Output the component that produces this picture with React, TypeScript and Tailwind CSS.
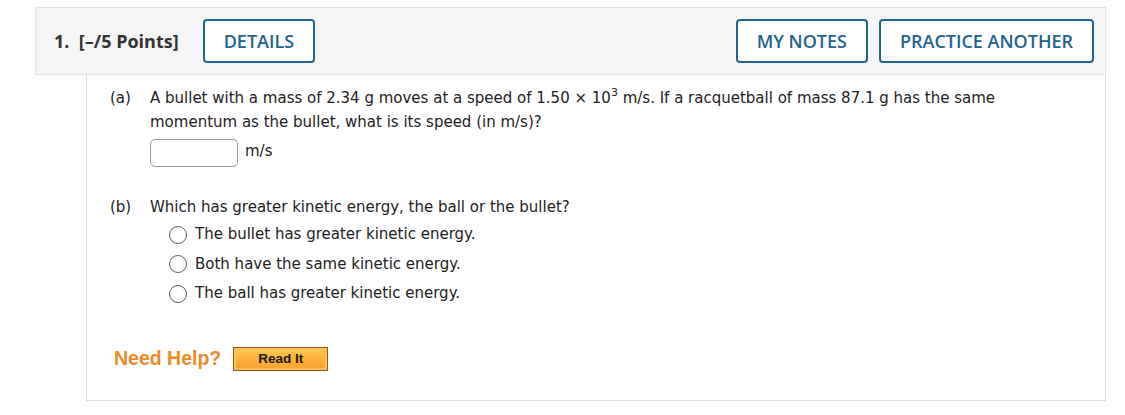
import { useState } from 'react';

const options = [
  'The bullet has greater kinetic energy.',
  'Both have the same kinetic energy.',
  'The ball has greater kinetic energy.',
];

function HeaderButton({ label }: { label: string }) {
  return (
    <button className="h-[44px] px-[19px] rounded-[4px] border-2 border-[#22638f] bg-white text-[#22638f] text-[18px] font-semibold font-[Open_Sans,sans-serif] uppercase leading-none">
      {label}
    </button>
  );
}

export default function App() {
  const [picked, setPicked] = useState<number | null>(null);

  return (
    <div className="w-[1125px] h-[415px] bg-white pt-[7px] font-[DejaVu_Sans,Verdana,sans-serif]">
      <div className="ml-[35px] w-[1071px] h-[68px] bg-[#f5f5f5] border border-[#e3e3e3] flex items-center pl-[18px] pr-[11px]">
        <span className="text-[18px] font-bold text-[#333] font-[Open_Sans,sans-serif] mr-[24px]">
          1.&nbsp; [–/5 Points]
        </span>
        <HeaderButton label="Details" />
        <div className="flex-1" />
        <div className="flex gap-[11px]">
          <HeaderButton label="My Notes" />
          <HeaderButton label="Practice Another" />
        </div>
      </div>

      <div className="ml-[86px] w-[1020px] h-[326px] border border-t-0 border-[#dedede] pl-[23px] pt-[11px] text-[15px] text-[#222] font-[DejaVu_Sans,Verdana,sans-serif]">
        <div className="flex">
          <span className="w-[40px] shrink-0 leading-[24px]">(a)</span>
          <div>
            <p className="leading-[24px]">
              A bullet with a mass of 2.34 g moves at a speed of 1.50 × 10
              <sup className="text-[11px] leading-none relative -top-[7px]">3</sup> m/s. If a racquetball of mass 87.1 g has the same
              <br />
              momentum as the bullet, what is its speed (in m/s)?
            </p>
            <div className="flex items-center gap-[7px] mt-[5px]">
              <input className="w-[88px] h-[28px] border border-[#999] rounded-[5px] outline-none px-1" />
              <span className="-mt-[4px]">m/s</span>
            </div>
          </div>
        </div>

        <div className="flex mt-[28px]">
          <span className="w-[40px] shrink-0 leading-[24px]">(b)</span>
          <div>
            <p className="leading-[24px]">Which has greater kinetic energy, the ball or the bullet?</p>
            <div className="ml-[19px] mt-[5px] flex flex-col gap-[8.5px]">
              {options.map((o, i) => (
                <label key={o} className="flex items-center gap-[8px] h-[21px] cursor-pointer" onClick={() => setPicked(i)}>
                  <span className="w-[18px] h-[18px] rounded-full border-[1.5px] border-[#5a5a5a] flex items-center justify-center">
                    {picked === i && <span className="w-[8px] h-[8px] rounded-full bg-[#333]" />}
                  </span>
                  <span>{o}</span>
                </label>
              ))}
            </div>
          </div>
        </div>

        <div className="flex items-center mt-[40px] ml-[4px]">
          <span className="text-[19.5px] font-bold text-[#ec8a25] font-[Liberation_Sans,Arial,sans-serif] mr-[12px]">
            Need Help?
          </span>
          <button className="w-[95px] h-[24px] border border-[#9c5418] bg-gradient-to-b from-[#ffcc55] via-[#fbb03b] to-[#f7a22c] shadow-[inset_0_0_0_2px_#fcc15a] text-[13.5px] font-bold text-[#1a1a1a] font-[Liberation_Sans,Arial,sans-serif]">
            Read It
          </button>
        </div>
      </div>
    </div>
  );
}
